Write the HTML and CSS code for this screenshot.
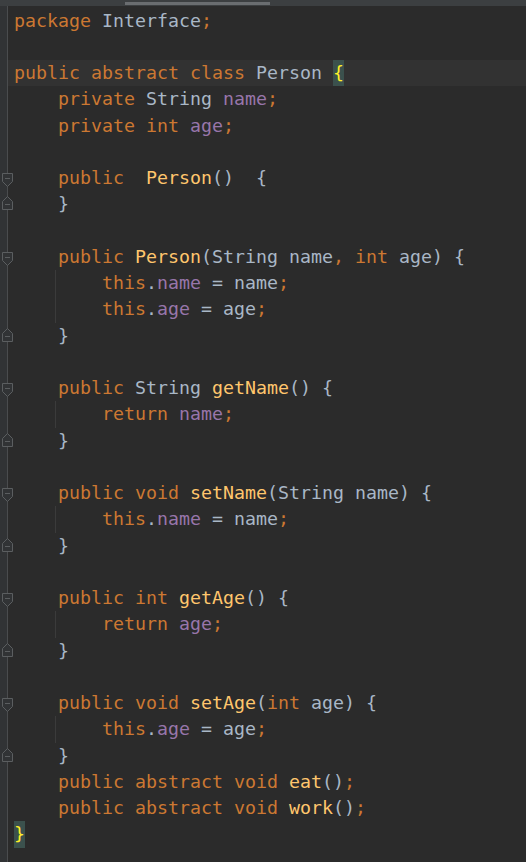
FILE: index.html
```html
<!DOCTYPE html>
<html>
<head>
<meta charset="utf-8">
<link rel="stylesheet" href="styles.css">
</head>
<body>
<div class="topbar"><div class="thumb"></div></div>
<div class="editor">
  <div class="line"><span class="fold"></span><span class="code"><span class="k">package</span> Interface<span class="k">;</span></span></div>
  <div class="line"><span class="fold"></span><span class="code"></span></div>
  <div class="line current"><span class="fold"></span><span class="code"><span class="k">public abstract class</span> Person <span class="brace">{</span></span></div>
  <div class="line"><span class="fold"></span><span class="code">    <span class="k">private</span> String <span class="f">name</span><span class="k">;</span></span></div>
  <div class="line"><span class="fold"></span><span class="code">    <span class="k">private int</span> <span class="f">age</span><span class="k">;</span></span></div>
  <div class="line"><span class="fold"></span><span class="code"></span></div>
  <div class="line"><span class="fold"><svg class="fs" width="11" height="14" viewBox="0 0 11 14"><path d="M0.5 0.5H10.5V8.5L5.5 13.5L0.5 8.5Z"/><line x1="3" y1="5.5" x2="8" y2="5.5"/></svg></span><span class="code">    <span class="k">public</span>  <span class="m">Person</span>()  {</span></div>
  <div class="line"><span class="fold"><svg class="fe" width="11" height="14" viewBox="0 0 11 14"><path d="M0.5 13.5H10.5V5.5L5.5 0.5L0.5 5.5Z"/><line x1="3" y1="8.5" x2="8" y2="8.5"/></svg></span><span class="code">    }</span></div>
  <div class="line"><span class="fold"></span><span class="code"></span></div>
  <div class="line"><span class="fold"><svg class="fs" width="11" height="14" viewBox="0 0 11 14"><path d="M0.5 0.5H10.5V8.5L5.5 13.5L0.5 8.5Z"/><line x1="3" y1="5.5" x2="8" y2="5.5"/></svg></span><span class="code">    <span class="k">public</span> <span class="m">Person</span>(String name<span class="k">, int</span> age) {</span></div>
  <div class="line"><span class="fold"></span><span class="code guide">        <span class="k">this</span>.<span class="f">name</span> = name<span class="k">;</span></span></div>
  <div class="line"><span class="fold"></span><span class="code guide">        <span class="k">this</span>.<span class="f">age</span> = age<span class="k">;</span></span></div>
  <div class="line"><span class="fold"><svg class="fe" width="11" height="14" viewBox="0 0 11 14"><path d="M0.5 13.5H10.5V5.5L5.5 0.5L0.5 5.5Z"/><line x1="3" y1="8.5" x2="8" y2="8.5"/></svg></span><span class="code">    }</span></div>
  <div class="line"><span class="fold"></span><span class="code"></span></div>
  <div class="line"><span class="fold"><svg class="fs" width="11" height="14" viewBox="0 0 11 14"><path d="M0.5 0.5H10.5V8.5L5.5 13.5L0.5 8.5Z"/><line x1="3" y1="5.5" x2="8" y2="5.5"/></svg></span><span class="code">    <span class="k">public</span> String <span class="m">getName</span>() {</span></div>
  <div class="line"><span class="fold"></span><span class="code guide">        <span class="k">return</span> <span class="f">name</span><span class="k">;</span></span></div>
  <div class="line"><span class="fold"><svg class="fe" width="11" height="14" viewBox="0 0 11 14"><path d="M0.5 13.5H10.5V5.5L5.5 0.5L0.5 5.5Z"/><line x1="3" y1="8.5" x2="8" y2="8.5"/></svg></span><span class="code">    }</span></div>
  <div class="line"><span class="fold"></span><span class="code"></span></div>
  <div class="line"><span class="fold"><svg class="fs" width="11" height="14" viewBox="0 0 11 14"><path d="M0.5 0.5H10.5V8.5L5.5 13.5L0.5 8.5Z"/><line x1="3" y1="5.5" x2="8" y2="5.5"/></svg></span><span class="code">    <span class="k">public void</span> <span class="m">setName</span>(String name) {</span></div>
  <div class="line"><span class="fold"></span><span class="code guide">        <span class="k">this</span>.<span class="f">name</span> = name<span class="k">;</span></span></div>
  <div class="line"><span class="fold"><svg class="fe" width="11" height="14" viewBox="0 0 11 14"><path d="M0.5 13.5H10.5V5.5L5.5 0.5L0.5 5.5Z"/><line x1="3" y1="8.5" x2="8" y2="8.5"/></svg></span><span class="code">    }</span></div>
  <div class="line"><span class="fold"></span><span class="code"></span></div>
  <div class="line"><span class="fold"><svg class="fs" width="11" height="14" viewBox="0 0 11 14"><path d="M0.5 0.5H10.5V8.5L5.5 13.5L0.5 8.5Z"/><line x1="3" y1="5.5" x2="8" y2="5.5"/></svg></span><span class="code">    <span class="k">public int</span> <span class="m">getAge</span>() {</span></div>
  <div class="line"><span class="fold"></span><span class="code guide">        <span class="k">return</span> <span class="f">age</span><span class="k">;</span></span></div>
  <div class="line"><span class="fold"><svg class="fe" width="11" height="14" viewBox="0 0 11 14"><path d="M0.5 13.5H10.5V5.5L5.5 0.5L0.5 5.5Z"/><line x1="3" y1="8.5" x2="8" y2="8.5"/></svg></span><span class="code">    }</span></div>
  <div class="line"><span class="fold"></span><span class="code"></span></div>
  <div class="line"><span class="fold"><svg class="fs" width="11" height="14" viewBox="0 0 11 14"><path d="M0.5 0.5H10.5V8.5L5.5 13.5L0.5 8.5Z"/><line x1="3" y1="5.5" x2="8" y2="5.5"/></svg></span><span class="code">    <span class="k">public void</span> <span class="m">setAge</span>(<span class="k">int</span> age) {</span></div>
  <div class="line"><span class="fold"></span><span class="code guide">        <span class="k">this</span>.<span class="f">age</span> = age<span class="k">;</span></span></div>
  <div class="line"><span class="fold"><svg class="fe" width="11" height="14" viewBox="0 0 11 14"><path d="M0.5 13.5H10.5V5.5L5.5 0.5L0.5 5.5Z"/><line x1="3" y1="8.5" x2="8" y2="8.5"/></svg></span><span class="code">    }</span></div>
  <div class="line"><span class="fold"></span><span class="code">    <span class="k">public abstract void</span> <span class="m">eat</span>()<span class="k">;</span></span></div>
  <div class="line"><span class="fold"></span><span class="code">    <span class="k">public abstract void</span> <span class="m">work</span>()<span class="k">;</span></span></div>
  <div class="line"><span class="fold"></span><span class="code"><span class="brace">}</span></span></div>
</div>
</body>
</html>
```

FILE: styles.css
```css
html, body {
  margin: 0;
  padding: 0;
  height: 100%;
  background: #2b2b2b;
  overflow: hidden;
}
body {
  background: linear-gradient(to right, #313335 0 7px, #4a4c4e 7px 8px, #2b2b2b 8px);
  font-family: "DejaVu Sans Mono", "Liberation Mono", monospace;
  font-size: 18.27px;
  color: #a9b7c6;
}
.topbar {
  height: 6px;
  background: #3c3f41;
  position: relative;
  z-index: 1;
}
.thumb {
  margin-left: 125px;
  width: 145px;
  height: 3px;
  position: relative;
  top: 2px;
  background: #6a6d70;
}
.editor {
  padding-top: 1.5px;
}
.line {
  display: flex;
  height: 26.26px;
  line-height: 26.26px;
}
.fold {
  width: 8px;
  flex: none;
  display: flex;
  align-items: flex-start;
}
.fold svg {
  flex: none;
  margin-left: 2px;
  fill: #313335;
  stroke: #5b5e60;
  stroke-width: 1;
}
.fold .fs { margin-top: 8px; }
.fold .fe { margin-top: 5px; }
.code {
  flex: 1;
  padding-left: 6px;
  white-space: pre;
}
.current .code {
  background: #323232;
}
.guide {
  background: linear-gradient(#3b3b3b, #3b3b3b) no-repeat 47px 0 / 1px 100%;
}
.k { color: #cc7832; }
.f { color: #9876aa; }
.m { color: #ffc66d; }
.brace {
  color: #ffef28;
  background: #3b514d;
  display: inline-block;
  height: 26.26px;
  vertical-align: top;
}
```
